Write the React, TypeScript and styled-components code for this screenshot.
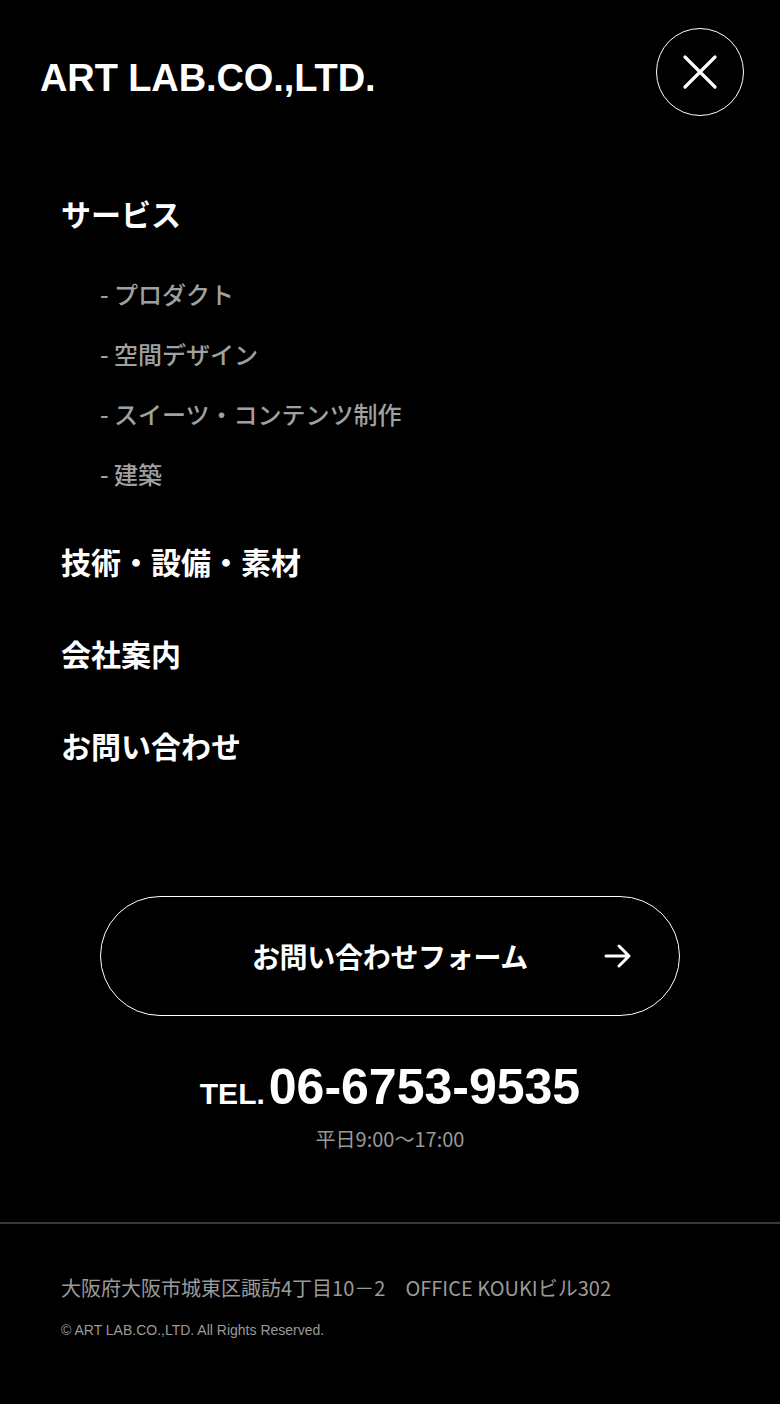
import React from "react";
import styled, { createGlobalStyle } from "styled-components";

const Global = createGlobalStyle`
  html, body { margin: 0; padding: 0; background: #000; }
  body { font-family: "Noto Sans CJK JP", "Noto Sans", sans-serif; color: #fff; }
  * { box-sizing: border-box; }
`;

const Page = styled.div`
  width: 780px;
  min-height: 1404px;
  background: #000;
  display: flex;
  flex-direction: column;
`;

const Header = styled.header`
  display: flex;
  align-items: center;
  justify-content: space-between;
  padding: 28px 36px 0 40px;
  height: 116px;
`;

const Logo = styled.div`
  font-family: "Liberation Sans", Arial, sans-serif;
  font-weight: 700;
  font-size: 38px;
  letter-spacing: -0.1px;
  line-height: 1;
  margin-top: 12px;
`;

const CloseButton = styled.button`
  width: 88px;
  height: 88px;
  border-radius: 50%;
  border: 1px solid #fff;
  background: transparent;
  display: flex;
  align-items: center;
  justify-content: center;
  padding: 0;
  cursor: pointer;
`;

const Nav = styled.nav`
  display: flex;
  flex-direction: column;
  padding: 77px 0 0 61px;
`;

const MainLink = styled.a<{ $mb: number }>`
  display: block;
  color: #fff;
  font-weight: 700;
  font-size: 30px;
  line-height: 40px;
  text-decoration: none;
  margin-bottom: ${(p) => p.$mb}px;
`;

const SubList = styled.ul`
  list-style: none;
  margin: 0 0 50px 0;
  padding: 0 0 0 39px;
  display: flex;
  flex-direction: column;
  gap: 26px;
`;

const SubItem = styled.li`
  color: #a0a0a0;
  font-size: 24px;
  font-weight: 500;
  line-height: 34px;
`;

const Contact = styled.section`
  display: flex;
  flex-direction: column;
  align-items: center;
  margin-top: 131px;
`;

const FormButton = styled.a`
  width: 580px;
  height: 120px;
  border: 1px solid #fff;
  border-radius: 60px;
  display: flex;
  align-items: center;
  justify-content: center;
  position: relative;
  color: #fff;
  text-decoration: none;
  font-weight: 700;
  font-size: 28px;
  letter-spacing: -0.3px;
`;

const Arrow = styled.span`
  position: absolute;
  right: 46px;
  top: 50%;
  transform: translateY(-50%);
  display: flex;
`;

const Tel = styled.div`
  font-family: "Liberation Sans", Arial, sans-serif;
  font-weight: 700;
  margin-top: 46px;
  display: flex;
  align-items: baseline;
  line-height: 1;
`;

const TelLabel = styled.span`
  font-size: 30px;
  margin-right: 4px;
`;

const TelNumber = styled.span`
  font-size: 50px;
`;

const Hours = styled.div`
  color: #9a9a9a;
  font-size: 20px;
  margin-top: 12px;
`;

const Divider = styled.hr`
  border: none;
  border-top: 2px solid #3a3a3a;
  margin: 69px 0 0 0;
  width: 100%;
`;

const Footer = styled.footer`
  padding: 49px 0 0 61px;
  display: flex;
  flex-direction: column;
  gap: 19px;
`;

const Address = styled.div`
  color: #9a9a9a;
  font-size: 20px;
  line-height: 30px;
`;

const Copy = styled.div`
  color: #9a9a9a;
  font-family: "Liberation Sans", Arial, sans-serif;
  font-size: 14px;
`;

export default function App() {
  return (
    <>
      <Global />
      <Page>
        <Header>
          <Logo>ART LAB.CO.,LTD.</Logo>
          <CloseButton aria-label="close">
            <svg width="36" height="36" viewBox="0 0 36 36">
              <path d="M3 3 L33 33 M33 3 L3 33" stroke="#fff" strokeWidth="3.2" strokeLinecap="round" />
            </svg>
          </CloseButton>
        </Header>
        <Nav>
          <MainLink $mb={44}>サービス</MainLink>
          <SubList>
            <SubItem>- プロダクト</SubItem>
            <SubItem>- 空間デザイン</SubItem>
            <SubItem>- スイーツ・コンテンツ制作</SubItem>
            <SubItem>- 建築</SubItem>
          </SubList>
          <MainLink $mb={52}>技術・設備・素材</MainLink>
          <MainLink $mb={52}>会社案内</MainLink>
          <MainLink $mb={0}>お問い合わせ</MainLink>
        </Nav>
        <Contact>
          <FormButton>
            お問い合わせフォーム
            <Arrow>
              <svg width="30" height="28" viewBox="0 0 30 28">
                <path d="M3 14 H26 M16 4 L26 14 L16 24" stroke="#fff" strokeWidth="3" fill="none" strokeLinecap="round" strokeLinejoin="round" />
              </svg>
            </Arrow>
          </FormButton>
          <Tel>
            <TelLabel>TEL.</TelLabel>
            <TelNumber>06-6753-9535</TelNumber>
          </Tel>
          <Hours>平日9:00〜17:00</Hours>
        </Contact>
        <Divider />
        <Footer>
          <Address>大阪府大阪市城東区諏訪4丁目10－2　OFFICE KOUKIビル302</Address>
          <Copy>© ART LAB.CO.,LTD. All Rights Reserved.</Copy>
        </Footer>
      </Page>
    </>
  );
}
